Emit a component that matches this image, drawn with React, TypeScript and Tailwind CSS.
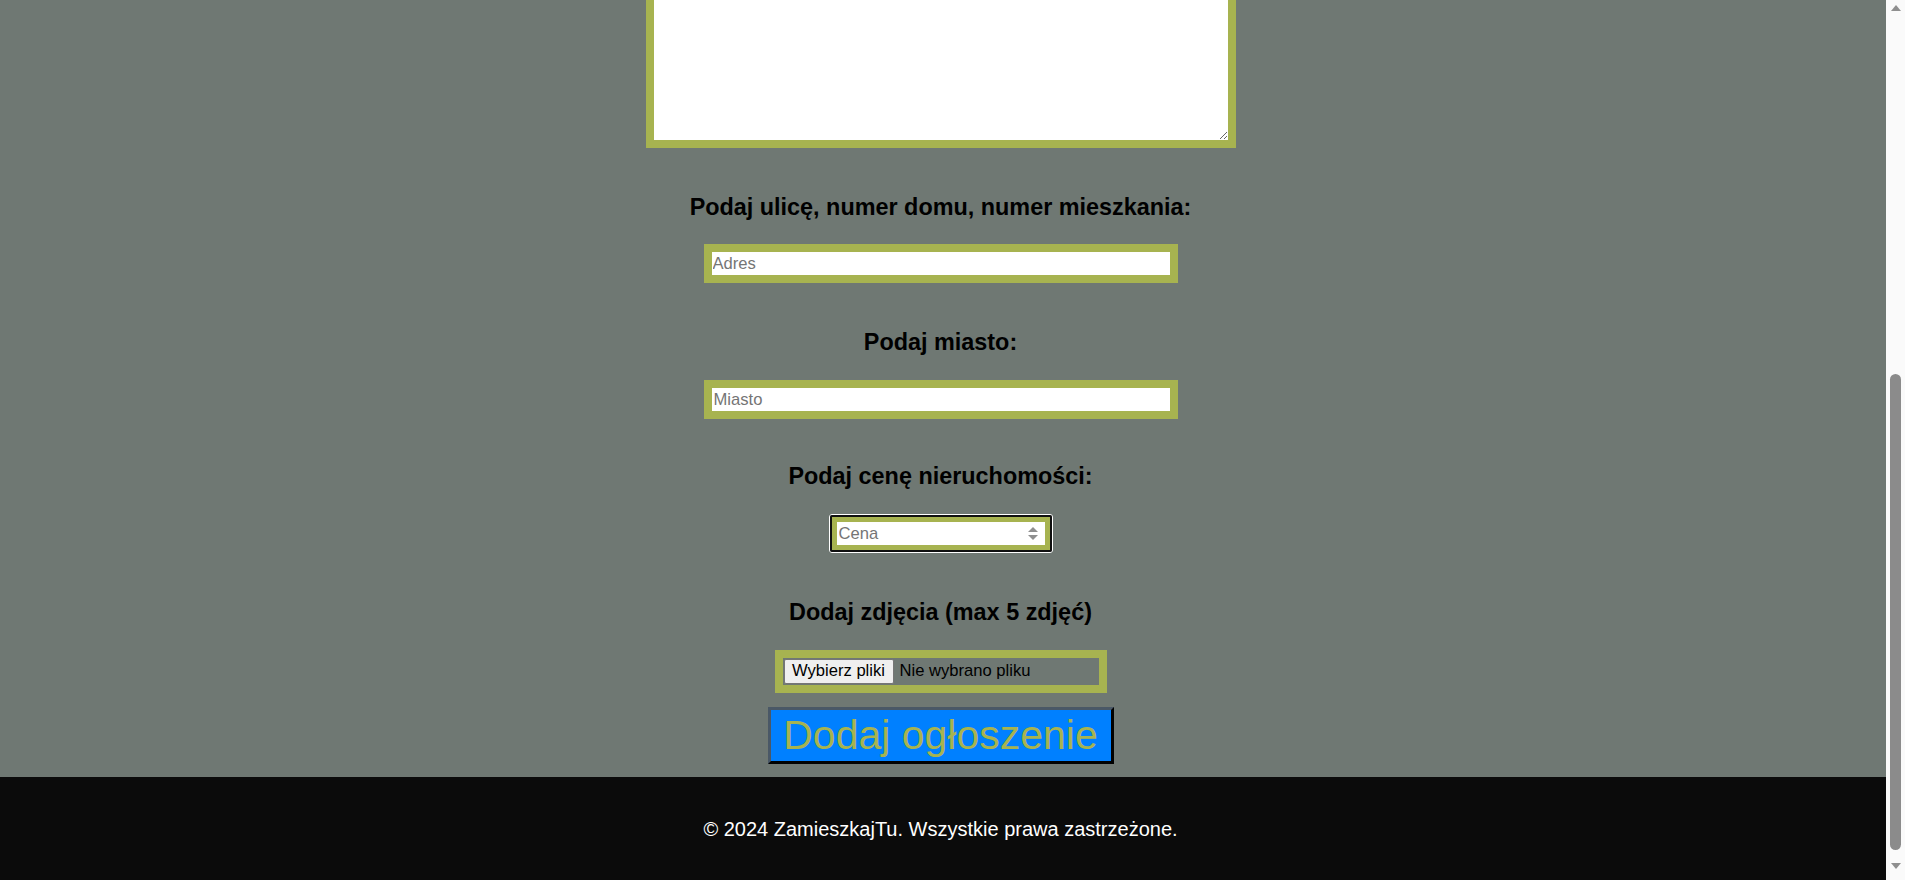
import React from "react";

// form page is shown scrolled to the bottom, so only the tail of the form is drawn
const Label: React.FC<{ children: React.ReactNode; className?: string }> = ({
  children,
  className,
}) => (
  <h3 className={"text-[23.4px] font-bold leading-[27px] text-black " + (className || "")}>
    {children}
  </h3>
);

const ScrollBar = () => (
  <div className="flex h-[880px] w-[19px] shrink-0 flex-col bg-[#fafafa]">
    {/* up arrow */}
    <div className="flex h-[16px] items-center justify-center">
      <svg width="10" height="6" viewBox="0 0 10 6">
        <polygon points="0,6 5,0 10,6" fill="#8f8f8f" />
      </svg>
    </div>
    <div className="flex-1">
      <div className="mx-auto mt-[358px] h-[476px] w-[11px] rounded-full bg-[#8b8b8b]" />
    </div>
    {/* down arrow */}
    <div className="mb-[7px] flex h-[14px] items-center justify-center">
      <svg width="10" height="6" viewBox="0 0 10 6">
        <polygon points="0,0 10,0 5,6" fill="#8f8f8f" />
      </svg>
    </div>
  </div>
);

export default function App() {
  return (
    <div className="flex h-[880px] w-[1905px] overflow-hidden font-['Liberation_Sans',Arial,sans-serif] text-[20px]">
      <div className="flex min-w-0 flex-1 flex-col">
        <main className="flex h-[777px] shrink-0 flex-col items-center bg-[#6f7873] pr-[5px]">
          {/* description textarea, top part is scrolled out of view */}
          <div className="flex h-[148px] flex-col justify-end overflow-hidden">
            <textarea className="h-[230px] w-[590px] shrink-0 resize border-8 border-[#a7b350] bg-white outline-none" />
          </div>

          <Label className="mt-[46px]">Podaj ulicę, numer domu, numer mieszkania:</Label>
          <input
            type="text"
            placeholder="Adres"
            className="mt-[23px] h-[39px] w-[474px] border-8 border-[#a7b350] bg-white px-[1px] text-[16.6px] text-black outline-none placeholder:text-[#757575]"
          />

          <Label className="mt-[46px]">Podaj miasto:</Label>
          <input
            type="text"
            placeholder="Miasto"
            className="mt-[24px] h-[39px] w-[474px] border-8 border-[#a7b350] bg-white px-[2px] text-[16.6px] text-black outline-none placeholder:text-[#757575]"
          />

          <Label className="mt-[44px]">Podaj cenę nieruchomości:</Label>
          {/* focused number field with the browser focus ring */}
          <div className="mt-[24px] rounded-[3px] border border-white">
            <div className="rounded-[2px] border-2 border-[#101010]">
              <div className="flex h-[33px] w-[218px] items-center border-[5px] border-[#a7b350] bg-white">
                <input
                  type="text"
                  placeholder="Cena"
                  className="h-full min-w-0 flex-1 bg-white px-[2px] text-[16.6px] text-black outline-none placeholder:text-[#757575]"
                />
                <svg width="10" height="15" viewBox="0 0 10 15" className="mr-[7px] shrink-0">
                  <polygon points="0,6 5,1 10,6" fill="#8f8f8f" />
                  <polygon points="0,9 10,9 5,14" fill="#8f8f8f" />
                </svg>
              </div>
            </div>
          </div>

          <Label className="mt-[46px]">Dodaj zdjęcia (max 5 zdjęć)</Label>
          <div className="mt-[24px] flex h-[43px] w-[332px] items-center border-8 border-[#a7b350]">
            <span className="ml-px flex h-[25px] w-[110px] items-center justify-center rounded-[2px] border border-[#767676] bg-[#efefef] text-[16.6px] text-black">
              Wybierz pliki
            </span>
            <span className="ml-[6px] text-[16.6px] text-black">Nie wybrano pliku</span>
          </div>

          <button className="mt-[14px] flex h-[57px] w-[346px] items-center justify-center border-[3px] border-t-[#4a5866] border-l-[#4a5866] border-r-black border-b-black bg-[#0080ff] text-[41px] leading-none text-[#a7b350]">
            Dodaj ogłoszenie
          </button>
        </main>

        <footer className="flex flex-1 items-center justify-center bg-[#0b0b0b] pr-[5px] text-[20px] text-white">
          © 2024 ZamieszkajTu. Wszystkie prawa zastrzeżone.
        </footer>
      </div>
      <ScrollBar />
    </div>
  );
}
